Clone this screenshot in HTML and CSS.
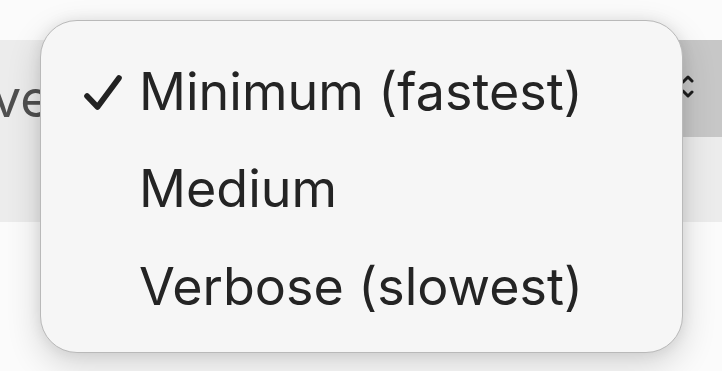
FILE: index.html
```html
<!DOCTYPE html>
<html lang="en">
<head>
    <meta charset="UTF-8">
    <meta name="viewport" content="width=device-width, initial-scale=1.0">
    <title>Logging Level</title>
    <link rel="stylesheet" href="styles.css">
</head>
<body>
    <div class="page">
        <div class="field-row">
            <span class="field-label">ve</span>
            <div class="popup-button">
                <span class="stepper">
                    <svg width="14" height="32" viewBox="0 0 14 32">
                        <path d="M3 11 L8 6 L12 10" fill="none" stroke="#1e1e1e" stroke-width="3" stroke-linecap="round" stroke-linejoin="round"/>
                        <path d="M3 20 L8 25 L12 21" fill="none" stroke="#1e1e1e" stroke-width="3" stroke-linecap="round" stroke-linejoin="round"/>
                    </svg>
                </span>
            </div>
        </div>

        <!-- Open menu of the popup button -->
        <div class="menu">
            <div class="menu-item checked">
                <span class="check">
                    <svg width="40" height="38" viewBox="0 0 40 38">
                        <path d="M4 23 L14.5 34 L36 5" fill="none" stroke="#222" stroke-width="5.6" stroke-linecap="round" stroke-linejoin="round"/>
                    </svg>
                </span>
                <span class="item-text">Minimum (fastest)</span>
            </div>
            <div class="menu-item">
                <span class="check"></span>
                <span class="item-text">Medium</span>
            </div>
            <div class="menu-item">
                <span class="check"></span>
                <span class="item-text">Verbose (slowest)</span>
            </div>
        </div>
    </div>
</body>
</html>
```

FILE: styles.css
```css
body {
    margin: 0;
    padding: 0;
    background: #fbfbfb;
    font-family: Inter, "Noto Sans", sans-serif;
    color: #242424;
    overflow: hidden;
}

.page {
    position: relative;
    width: 722px;
    height: 371px;
    padding-top: 40px;
    box-sizing: border-box;
}

.field-row {
    display: flex;
    align-items: flex-start;
    height: 182px;
    background: #ececec;
}

.field-label {
    margin-left: -8px;
    margin-top: 29px;
    font-size: 52px;
    line-height: 60px;
    color: #505050;
}

.popup-button {
    flex: 1;
    display: flex;
    justify-content: flex-end;
    align-items: center;
    height: 97px;
    margin-left: 12px;
    padding-right: 28px;
    background: #c7c7c7;
}

.stepper {
    display: flex;
    margin-top: -4px;
}

/* the open menu sits over the field */
.menu {
    position: absolute;
    left: 40px;
    top: 20px;
    width: 643px;
    height: 333px;
    box-sizing: border-box;
    padding: 22px 0 0 42px;
    background: #f6f6f6;
    border: 1.5px solid #b9b9b9;
    border-radius: 37px;
    box-shadow: 0 12px 34px rgba(0, 0, 0, 0.16), 0 0 14px rgba(0, 0, 0, 0.08);
}

.menu-item {
    display: flex;
    align-items: center;
    height: 97.5px;
}

.check {
    width: 40px;
    height: 38px;
    margin-right: 16px;
    display: flex;
}

.item-text {
    font-size: 52px;
    line-height: 60px;
}
```
